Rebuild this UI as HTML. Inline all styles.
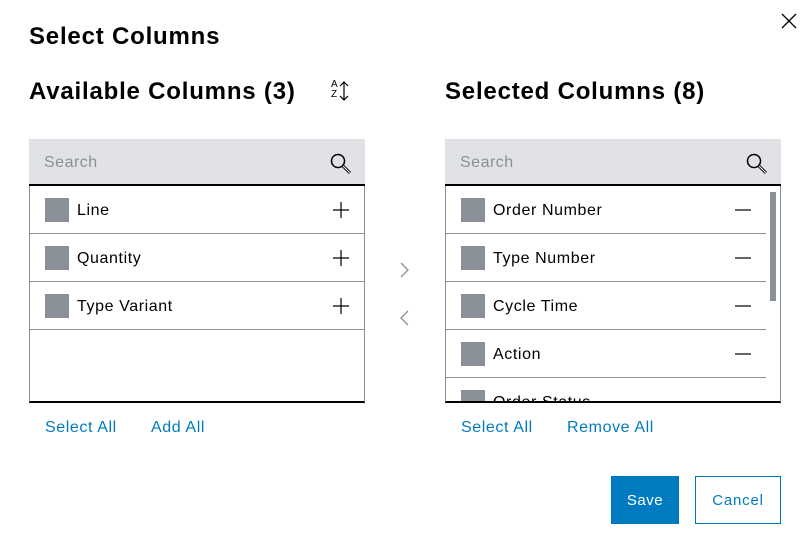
<!DOCTYPE html><html><head><style>
body{margin:0;width:811px;height:551px;background:#fff;font-family:"Liberation Sans",sans-serif;color:#000;position:relative;overflow:hidden}
.a{position:absolute}
h1{position:absolute;margin:0;font-size:24px;font-weight:bold;letter-spacing:.8px}
.panel{position:absolute;top:139px;width:336px;height:264px}
.search{height:47px;background:#e0e2e5;border-bottom:2px solid #000;box-sizing:border-box;position:relative}
.search span{position:absolute;left:15px;top:15px;font-size:16px;color:#8a9097;letter-spacing:.5px}
.list{position:absolute;top:47px;left:0;width:336px;height:217px;border:1px solid #8a9097;border-top:none;border-bottom:2px solid #000;box-sizing:border-box;overflow:hidden}
.row{height:48px;border-bottom:1px solid #8a9097;position:relative;box-sizing:border-box}
.cb{position:absolute;left:15px;top:12px;width:24px;height:24px;background:#8a9097}
.row span{position:absolute;left:47px;top:16px;font-size:16px;letter-spacing:.6px}
.ic{position:absolute;right:14px;top:15px}
.lnk{position:absolute;top:419px;font-size:16px;color:#007bc0;letter-spacing:.6px}
</style></head><body>
<svg class="a" style="left:780px;top:12px" width="18" height="18"><path d="M2 2L16 16M16 2L2 16" stroke="#000" stroke-width="1.3"/></svg>
<h1 style="left:29px;top:23px">Select Columns</h1>
<h1 style="left:29px;top:78px">Available Columns (3)</h1>
<h1 style="left:445px;top:78px">Selected Columns (8)</h1>
<div class="a" style="left:331px;top:80px;font-size:10px;line-height:10px">A<br>Z</div>
<svg class="a" style="left:338px;top:80px" width="14" height="22"><path d="M6 2V20M2 6L6 2L10 6M2 16L6 20L10 16" fill="none" stroke="#000" stroke-width="1.2"/></svg>

<div class="panel" style="left:29px">
<div class="search"><span>Search</span><svg class="a" style="right:12px;top:13px" width="24" height="24"><circle cx="9" cy="9" r="6.5" fill="none" stroke="#000" stroke-width="1.5"/><path d="M14 14L21 21" stroke="#000" stroke-width="3"/><path d="M14 14L21 21" stroke="#fff" stroke-width="1"/></svg></div>
<div class="list">
<div class="row"><div class="cb"></div><span>Line</span><svg class="ic" width="18" height="18"><path d="M9 1V17M1 9H17" stroke="#000" stroke-width="1.2"/></svg></div>
<div class="row"><div class="cb"></div><span>Quantity</span><svg class="ic" width="18" height="18"><path d="M9 1V17M1 9H17" stroke="#000" stroke-width="1.2"/></svg></div>
<div class="row"><div class="cb"></div><span>Type Variant</span><svg class="ic" width="18" height="18"><path d="M9 1V17M1 9H17" stroke="#000" stroke-width="1.2"/></svg></div>
</div></div>

<svg class="a" style="left:398px;top:262px" width="14" height="70"><path d="M3 1L10 8L3 15" fill="none" stroke="#8a9097" stroke-width="1.3"/><path d="M10 49L3 56L10 63" fill="none" stroke="#8a9097" stroke-width="1.3"/></svg>

<div class="panel" style="left:445px">
<div class="search"><span>Search</span><svg class="a" style="right:12px;top:13px" width="24" height="24"><circle cx="9" cy="9" r="6.5" fill="none" stroke="#000" stroke-width="1.5"/><path d="M14 14L21 21" stroke="#000" stroke-width="3"/><path d="M14 14L21 21" stroke="#fff" stroke-width="1"/></svg></div>
<div class="list">
<div style="position:absolute;right:4px;top:6px;width:6px;height:109px;background:#8a9097"></div>
<div style="width:320px">
<div class="row"><div class="cb"></div><span>Order Number</span><svg class="ic" width="18" height="18"><path d="M1 9H17" stroke="#000" stroke-width="1.2"/></svg></div>
<div class="row"><div class="cb"></div><span>Type Number</span><svg class="ic" width="18" height="18"><path d="M1 9H17" stroke="#000" stroke-width="1.2"/></svg></div>
<div class="row"><div class="cb"></div><span>Cycle Time</span><svg class="ic" width="18" height="18"><path d="M1 9H17" stroke="#000" stroke-width="1.2"/></svg></div>
<div class="row"><div class="cb"></div><span>Action</span><svg class="ic" width="18" height="18"><path d="M1 9H17" stroke="#000" stroke-width="1.2"/></svg></div>
<div class="row"><div class="cb"></div><span>Order Status</span></div>
</div></div></div>

<div class="lnk" style="left:45px">Select All</div>
<div class="lnk" style="left:151px">Add All</div>
<div class="lnk" style="left:461px">Select All</div>
<div class="lnk" style="left:567px">Remove All</div>

<div class="a" style="left:611px;top:476px;width:68px;height:48px;background:#007bc0;color:#fff;font-size:15px;line-height:50px;text-align:center;letter-spacing:.5px">Save</div>
<div class="a" style="left:695px;top:476px;width:86px;height:48px;box-sizing:border-box;border:1px solid #007bc0;color:#007bc0;font-size:15px;line-height:48px;text-align:center;letter-spacing:.8px">Cancel</div>
</body></html>
